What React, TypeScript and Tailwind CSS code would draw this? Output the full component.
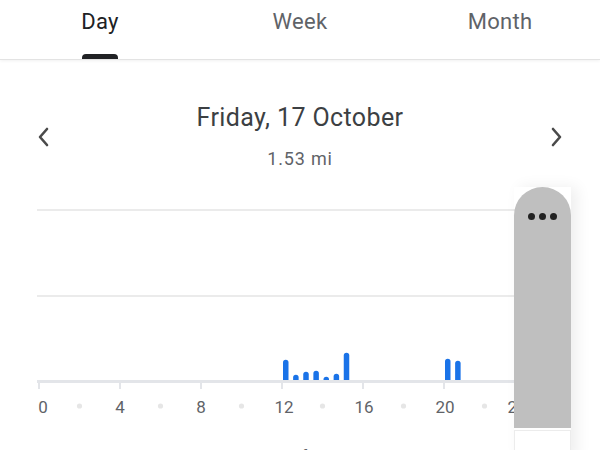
import React from "react";

const bars: [number, number][] = [
  [12, 360], [12.5, 375], [13, 372], [13.5, 371], [14, 377], [14.5, 374], [15, 353], [20, 359], [20.5, 361],
];

const X0 = 39;
const PH = 20.25;
const OFF = 190;

const labelX: Record<number, number> = { 0: 43, 4: 120, 8: 201, 12: 284, 16: 364, 20: 445, 24: 517 };

export default function App() {
  return (
    <div className="relative w-[600px] h-[450px] overflow-hidden bg-white" style={{ fontFamily: "Roboto, 'Open Sans', sans-serif" }}>
      {/* Tabs */}
      <div className="relative h-[60px] flex border-b border-[#e3e3e3] shadow-[0_1px_3px_rgba(0,0,0,0.06)]">
        <div className="flex-1 relative flex justify-center">
          <span className="mt-[8px] text-[22px] leading-[28px] tracking-[0.3px] text-[#202124]">Day</span>
          <div className="absolute bottom-0 left-[82px] w-[36px] h-[5px] rounded-t-[4px] bg-[#202124]" />
        </div>
        <div className="flex-1 flex justify-center">
          <span className="mt-[8px] text-[22px] leading-[28px] tracking-[0.3px] text-[#5f6368]">Week</span>
        </div>
        <div className="flex-1 flex justify-center">
          <span className="mt-[8px] text-[22px] leading-[28px] tracking-[0.3px] text-[#5f6368]">Month</span>
        </div>
      </div>

      {/* Date row */}
      <div className="mt-[43px] flex items-center justify-between pl-[36px] pr-[36px]">
        <svg width="16" height="22" viewBox="0 0 16 22">
          <path d="M11 3 L4 11 L11 19" fill="none" stroke="#4a4a4a" strokeWidth="2.6" strokeLinecap="round" strokeLinejoin="round" />
        </svg>
        <div className="flex flex-col items-center">
          <div className="text-[25px] leading-[30px] tracking-[0.4px] text-[#3c4043]">Friday, 17 October</div>
          <div className="mt-[14px] text-[18px] leading-[24px] tracking-[0.8px] text-[#5f6368]">1.53 mi</div>
        </div>
        <svg width="16" height="22" viewBox="0 0 16 22">
          <path d="M5 3 L12 11 L5 19" fill="none" stroke="#4a4a4a" strokeWidth="2.6" strokeLinecap="round" strokeLinejoin="round" />
        </svg>
      </div>

      {/* Chart */}
      <svg className="absolute left-0 top-[190px]" width="600" height="240" viewBox="0 0 600 240">
        <line x1="37" x2="565" y1={210 - OFF} y2={210 - OFF} stroke="#ebebeb" strokeWidth="2" />
        <line x1="37" x2="565" y1={296 - OFF} y2={296 - OFF} stroke="#ebebeb" strokeWidth="2" />
        {bars.map(([h, top], i) => {
          const x = X0 + h * PH + 1;
          const y = top - OFF;
          return (
            <path
              key={i}
              d={`M${x} ${y + 2.5} A2.5 2.5 0 0 1 ${x + 5.5} ${y + 2.5} L${x + 5.5} ${190} L${x} ${190} Z`}
              fill="#1a73e8"
            />
          );
        })}
        <line x1="37" x2="565" y1={191.5} y2={191.5} stroke="#e3e5e9" strokeWidth="3" />
        {[0, 4, 8, 12, 16, 20, 24].map((h) => (
          <rect key={h} x={X0 + h * PH - 1} y={191} width="2" height="8" fill="#e3e5e9" />
        ))}
        {[2, 6, 10, 14, 18, 22].map((h) => (
          <circle key={h} cx={X0 + h * PH} cy={216} r="2.6" fill="#e6e6e6" />
        ))}
        {[0, 4, 8, 12, 16, 20, 24].map((h) => (
          <text
            key={h}
            x={labelX[h]}
            y={223}
            textAnchor="middle"
            fontSize="17"
            fill="#5f6368"
            fontFamily="Roboto, sans-serif"
          >
            {h}
          </text>
        ))}
      </svg>

      {/* Bottom text, mostly clipped */}
      <div className="absolute left-[40px] top-[446px] text-[16px] leading-[22px] text-[#5f6368] whitespace-nowrap">
        The distance you travel is calculated from your steps
      </div>

      {/* Overlay handle */}
      <div className="absolute left-[514px] top-[187px] w-[57px] flex flex-col shadow-[6px_0_14px_rgba(0,0,0,0.07)]">
        <div className="h-[241px] rounded-t-full bg-[#bfbfbf] flex justify-center pt-[26px] gap-[4px]">
          <span className="w-[7px] h-[7px] rounded-full bg-[#222]" />
          <span className="w-[7px] h-[7px] rounded-full bg-[#222]" />
          <span className="w-[7px] h-[7px] rounded-full bg-[#222]" />
        </div>
        <div className="mt-[2px] h-[30px] bg-white border border-[#ececec]" />
      </div>
    </div>
  );
}
